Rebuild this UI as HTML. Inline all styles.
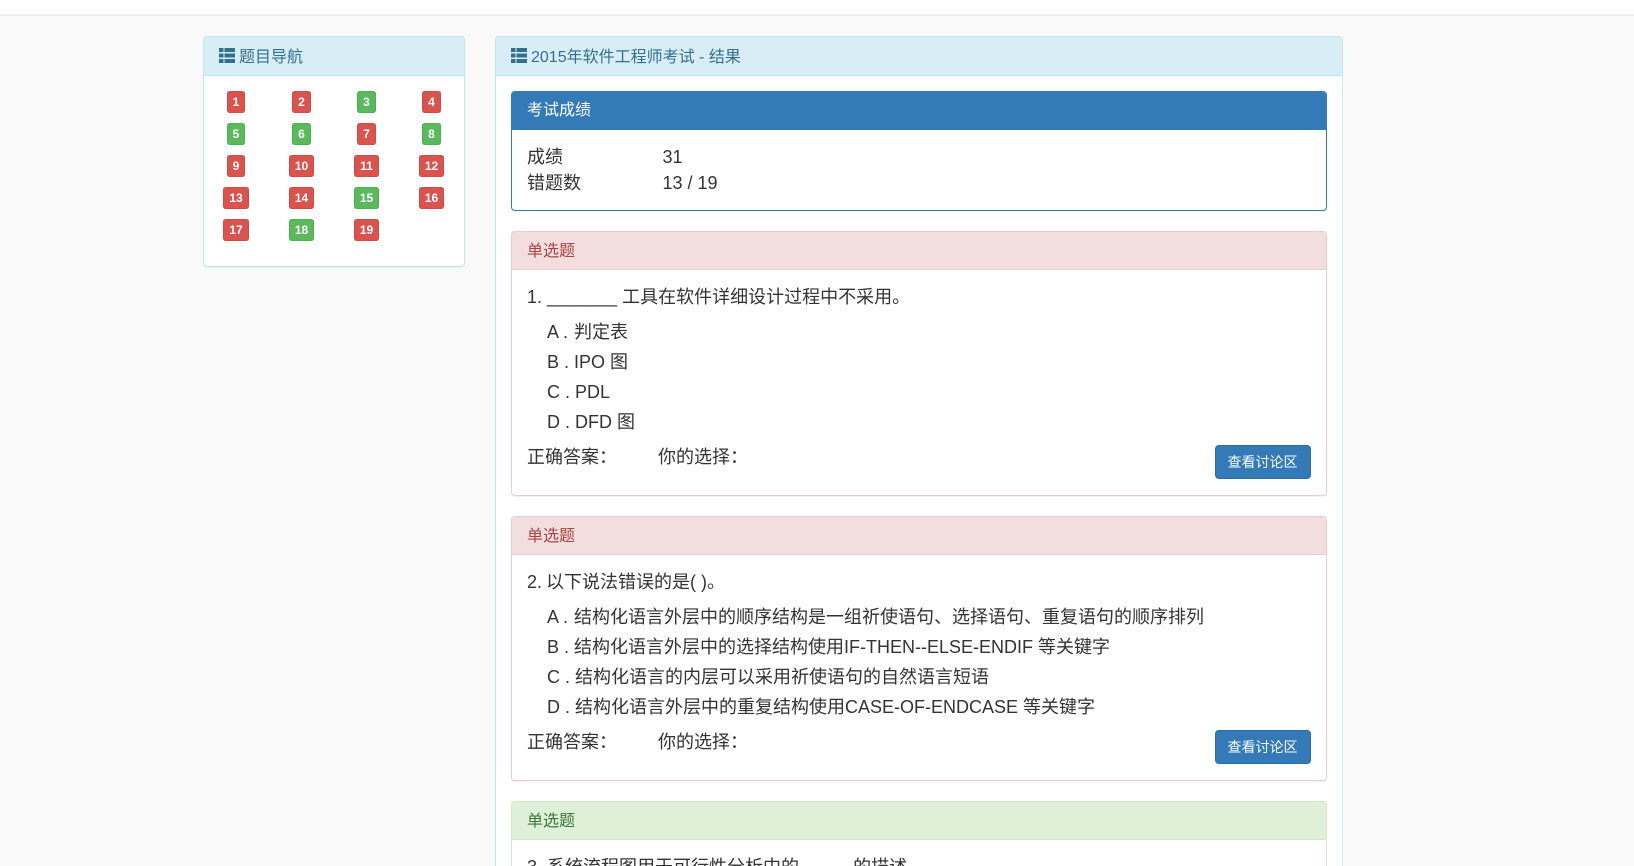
<!DOCTYPE html>
<html lang="zh">
<head>
<meta charset="utf-8">
<title>2015年软件工程师考试 - 结果</title>
<style>
html,body{margin:0;padding:0;width:1634px;height:866px;overflow:hidden;background:#f9f9f9;}
body{position:relative;font-family:"Liberation Sans","Noto Sans CJK SC",sans-serif;color:#333;font-size:18px;}
div,span,a{box-sizing:border-box;}
#wrap{position:absolute;left:0;top:0;width:1634px;height:866px;overflow:hidden;}
.top{position:absolute;left:0;top:0;width:1634px;height:16px;background:#fff;border-bottom:2px solid #eee;}
.panel{position:absolute;background:#fff;border:1px solid;border-radius:4px;box-shadow:0 1px 1px rgba(0,0,0,.05);}
.cut{border-bottom:none;border-radius:4px 4px 0 0;box-shadow:none;}
.head{position:absolute;left:0;right:0;top:0;border-bottom:1px solid;border-radius:3px 3px 0 0;}
.info{border-color:#bce8f1;}
.info .hi{background:#d9edf7;border-color:#bce8f1;color:#31708f;}
.pri{border-color:#337ab7;}
.pri .hi{background:#337ab7;border-color:#337ab7;color:#fff;}
.dan{border-color:#ebccd1;}
.dan .hi{background:#f2dede;border-color:#ebccd1;color:#a94442;}
.suc{border-color:#d6e9c6;}
.suc .hi{background:#dff0d8;border-color:#d6e9c6;color:#3c763d;}
.t{position:absolute;white-space:nowrap;line-height:26px;height:26px;font-size:18px;}
.h{position:absolute;white-space:nowrap;font-size:16px;line-height:22px;height:22px;}
.l{position:absolute;height:22px;border-radius:3px;color:#fff;font-size:12px;font-weight:bold;line-height:22px;text-align:center;}
.r{background:#d9534f;box-shadow:inset 0 0 0 1px #d24a46;}
.g{background:#5cb85c;box-shadow:inset 0 0 0 1px #52ad52;}
.btn{position:absolute;left:1215px;width:96px;height:34px;background:#337ab7;border:1px solid #2e6da4;border-radius:4px;color:#fff;font-size:14px;line-height:32px;text-align:center;white-space:nowrap;padding-right:1px;}
svg{position:absolute;display:block;}
</style>
</head>
<body>
<div id="wrap">
<div class="top"></div>

<!-- left panel -->
<div class="panel info" style="left:203px;top:36px;width:262px;height:231px;">
  <div class="head hi" style="height:39px;"></div>
</div>
<svg style="left:219px;top:48px;" width="16" height="15" viewBox="0 0 16 15"><g fill="#31708f"><rect x="0" y="0" width="4.5" height="4"/><rect x="5.5" y="0" width="10.5" height="4"/><rect x="0" y="5.5" width="4.5" height="4"/><rect x="5.5" y="5.5" width="10.5" height="4"/><rect x="0" y="11" width="4.5" height="4"/><rect x="5.5" y="11" width="10.5" height="4"/></g></svg>
<div class="h" style="left:239px;top:47px;color:#31708f;">题目导航</div>

<div class="l r" style="left:227px;top:91px;width:18px;">1</div>
<div class="l r" style="left:292px;top:91px;width:19px;">2</div>
<div class="l g" style="left:357px;top:91px;width:19px;">3</div>
<div class="l r" style="left:422px;top:91px;width:19px;">4</div>
<div class="l g" style="left:227px;top:123px;width:18px;">5</div>
<div class="l g" style="left:292px;top:123px;width:19px;">6</div>
<div class="l r" style="left:357px;top:123px;width:19px;">7</div>
<div class="l g" style="left:422px;top:123px;width:19px;">8</div>
<div class="l r" style="left:227px;top:155px;width:18px;">9</div>
<div class="l r" style="left:289px;top:155px;width:25px;">10</div>
<div class="l r" style="left:354px;top:155px;width:25px;">11</div>
<div class="l r" style="left:419px;top:155px;width:25px;">12</div>
<div class="l r" style="left:223px;top:187px;width:26px;">13</div>
<div class="l r" style="left:289px;top:187px;width:25px;">14</div>
<div class="l g" style="left:354px;top:187px;width:25px;">15</div>
<div class="l r" style="left:419px;top:187px;width:25px;">16</div>
<div class="l r" style="left:223px;top:219px;width:26px;">17</div>
<div class="l g" style="left:289px;top:219px;width:25px;">18</div>
<div class="l r" style="left:354px;top:219px;width:25px;">19</div>

<!-- main panel -->
<div class="panel info cut" style="left:495px;top:36px;width:848px;height:830px;">
  <div class="head hi" style="height:39px;"></div>
</div>
<svg style="left:511px;top:48px;" width="16" height="15" viewBox="0 0 16 15"><g fill="#31708f"><rect x="0" y="0" width="4.5" height="4"/><rect x="5.5" y="0" width="10.5" height="4"/><rect x="0" y="5.5" width="4.5" height="4"/><rect x="5.5" y="5.5" width="10.5" height="4"/><rect x="0" y="11" width="4.5" height="4"/><rect x="5.5" y="11" width="10.5" height="4"/></g></svg>
<div class="h" style="left:531px;top:47px;color:#31708f;">2015年软件工程师考试 - 结果</div>

<!-- score -->
<div class="panel pri" style="left:511px;top:91px;width:816px;height:120px;">
  <div class="head hi" style="height:38px;"></div>
</div>
<div class="h" style="left:527px;top:100px;color:#fff;">考试成绩</div>
<div class="t" style="left:527px;top:144px;">成绩</div>
<div class="t" style="left:662.5px;top:144px;">31</div>
<div class="t" style="left:527px;top:170px;">错题数</div>
<div class="t" style="left:662.5px;top:170px;">13 / 19</div>

<!-- Q1 -->
<div class="panel dan" style="left:511px;top:231px;width:816px;height:265px;">
  <div class="head hi" style="height:38px;"></div>
</div>
<div class="h" style="left:527px;top:241px;color:#a94442;">单选题</div>
<div class="t" style="left:527px;top:284px;">1. _______ 工具在软件详细设计过程中不采用。</div>
<div class="t" style="left:547px;top:319px;">A .<span style="margin-left:1px;"> </span>判定表</div>
<div class="t" style="left:547px;top:349px;">B . IPO 图</div>
<div class="t" style="left:547px;top:379px;">C . PDL</div>
<div class="t" style="left:547px;top:409px;">D . DFD 图</div>
<div class="t" style="left:527px;top:444px;">正确答案：</div>
<div class="t" style="left:658px;top:444px;">你的选择：</div>
<div class="btn" style="top:445px;">查看讨论区</div>

<!-- Q2 -->
<div class="panel dan" style="left:511px;top:516px;width:816px;height:265px;">
  <div class="head hi" style="height:38px;"></div>
</div>
<div class="h" style="left:527px;top:526px;color:#a94442;">单选题</div>
<div class="t" style="left:527px;top:569px;">2.<span style="margin-left:-1px;"> </span>以下说法错误的是( )。</div>
<div class="t" style="left:547px;top:604px;">A .<span style="margin-left:1px;"> </span>结构化语言外层中的顺序结构是一组祈使语句、选择语句、重复语句的顺序排列</div>
<div class="t" style="left:547px;top:634px;">B . 结构化语言外层中的选择结构使用IF-THEN--ELSE-ENDIF 等关键字</div>
<div class="t" style="left:547px;top:664px;">C . 结构化语言的内层可以采用祈使语句的自然语言短语</div>
<div class="t" style="left:547px;top:694px;">D . 结构化语言外层中的重复结构使用CASE-OF-ENDCASE 等关键字</div>
<div class="t" style="left:527px;top:729px;">正确答案：</div>
<div class="t" style="left:658px;top:729px;">你的选择：</div>
<div class="btn" style="top:730px;">查看讨论区</div>

<!-- Q3 -->
<div class="panel suc cut" style="left:511px;top:801px;width:816px;height:65px;">
  <div class="head hi" style="height:38px;"></div>
</div>
<div class="h" style="left:527px;top:811px;color:#3c763d;">单选题</div>
<div class="t" style="left:527px;top:854px;height:12px;overflow:hidden;">3. 系统流程图用于可行性分析中的 ____<span style="margin-left:4px;"> </span>的描述</div>
</div>
</body>
</html>
